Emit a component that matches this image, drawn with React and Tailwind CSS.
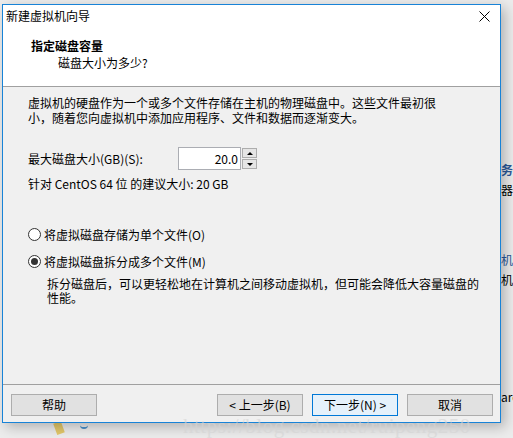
import React from 'react';

const font = { fontFamily: '"Microsoft YaHei", "Noto Sans CJK SC", "Noto Sans", sans-serif' };

const Button = ({ children, primary }) => (
    <div
        className={
            'w-[86px] h-[22px] flex items-center justify-center text-[12px] text-black border ' +
            (primary ? 'border-[#0078d7] bg-[#e5f1fb]' : 'border-[#adadad] bg-[#e1e1e1]')
        }
    >
        {children}
    </div>
);

const Radio = ({ checked, label }) => (
    <div className="flex items-center h-[15px]">
        <div className="w-[13px] h-[13px] rounded-full border border-[#333] bg-white flex items-center justify-center">
            {checked && <div className="w-[7px] h-[7px] rounded-full bg-[#333]"></div>}
        </div>
        <span className="ml-[3px] leading-[15px]">{label}</span>
    </div>
);

export default function App() {
    return (
        <div className="relative w-[513px] h-[438px] overflow-hidden bg-[#ececec]" style={font}>
            {/* desktop behind the dialog */}
            <div className="absolute left-[501px] top-[160px] w-[12px] overflow-hidden text-[12px] leading-[20px] text-[#2b5797]">
                <div className="font-bold">务</div>
                <div className="text-black">器</div>
                <div className="h-[50px]"></div>
                <div>机</div>
                <div className="text-black">机</div>
            </div>
            <div className="absolute left-[501px] top-[388px] w-[12px] text-[12px] text-black overflow-hidden">are</div>
            <div className="absolute left-[55px] top-[422px] w-[8px] h-[12px] bg-[#e3c86a] rotate-[-20deg]"></div>
            <div className="absolute left-[80px] top-[424px] w-[8px] h-[5px] border-b-2 border-[#4a90c9] rounded-b-full"></div>

            {/* dialog window */}
            <div className="relative ml-[2px] mt-[4px] w-[499px] h-[419px] border border-[#1883d7] bg-[#f0f0f0] flex flex-col text-[12px] text-black shadow-[4px_4px_12px_rgba(0,0,0,0.25)]">
                <div className="bg-white h-[81px]">
                    <div className="h-[22px] flex items-center justify-between pl-[3px] pr-[10px]">
                        <span>新建虚拟机向导</span>
                        <svg width="11" height="11" viewBox="0 0 11 11">
                            <path d="M0.5 0.5L10.5 10.5M10.5 0.5L0.5 10.5" stroke="#000" strokeWidth="1" />
                        </svg>
                    </div>
                    <div className="pl-[28px] pt-[11px] leading-[15px]">
                        <div className="font-bold">指定磁盘容量</div>
                        <div className="pl-[27px] mt-[2px]">磁盘大小为多少?</div>
                    </div>
                </div>
                <div className="h-px bg-[#a0a0a0]"></div>

                <div className="flex-1 pl-[25px] pt-[8px]">
                    <p className="leading-[15px] w-[420px]">
                        虚拟机的硬盘作为一个或多个文件存储在主机的物理磁盘中。这些文件最初很小，随着您向虚拟机中添加应用程序、文件和数据而逐渐变大。
                    </p>

                    <div className="mt-[22px] flex items-center h-[23px]">
                        <span className="w-[150px]">最大磁盘大小(GB)(S):</span>
                        <div className="w-[63px] h-[23px] border border-[#abadb3] bg-white flex items-center justify-end pr-[2px]">
                            20.0
                        </div>
                        <div className="ml-[1px] flex flex-col gap-[1px]">
                            <div className="w-[15px] h-[10px] border border-[#adadad] bg-[#e5e5e5] flex items-center justify-center">
                                <div className="w-0 h-0 border-l-[3px] border-r-[3px] border-b-[3px] border-l-transparent border-r-transparent border-b-black"></div>
                            </div>
                            <div className="w-[15px] h-[10px] border border-[#adadad] bg-[#e5e5e5] flex items-center justify-center">
                                <div className="w-0 h-0 border-l-[3px] border-r-[3px] border-t-[3px] border-l-transparent border-r-transparent border-t-black"></div>
                            </div>
                        </div>
                    </div>

                    <div className="mt-[6px] leading-[15px]">针对 CentOS 64 位 的建议大小: 20 GB</div>

                    <div className="mt-[36px]">
                        <Radio label="将虚拟磁盘存储为单个文件(O)" />
                    </div>
                    <div className="mt-[12px]">
                        <Radio checked label="将虚拟磁盘拆分成多个文件(M)" />
                    </div>
                    <p className="mt-[8px] ml-[19px] w-[440px] leading-[14px]">
                        拆分磁盘后，可以更轻松地在计算机之间移动虚拟机，但可能会降低大容量磁盘的性能。
                    </p>
                </div>

                <div className="h-px bg-[#a0a0a0]"></div>
                <div className="h-[37px] pt-[9px] pl-[8px] pr-[7px] flex items-start">
                    <Button>帮助</Button>
                    <div className="flex-1"></div>
                    <Button>&lt; 上一步(B)</Button>
                    <div className="w-[9px]"></div>
                    <Button primary>下一步(N) &gt;</Button>
                    <div className="w-[9px]"></div>
                    <Button>取消</Button>
                </div>
            </div>

            {/* watermark */}
            <div
                className="absolute left-[183px] top-[411px] text-[21px] tracking-[0.5px] text-[#d4d4d4] opacity-60 pointer-events-none whitespace-nowrap"
                style={{ fontFamily: '"Liberation Serif", serif' }}
            >
                https://blog.csdn.net/ruipeng250
            </div>
        </div>
    );
}
